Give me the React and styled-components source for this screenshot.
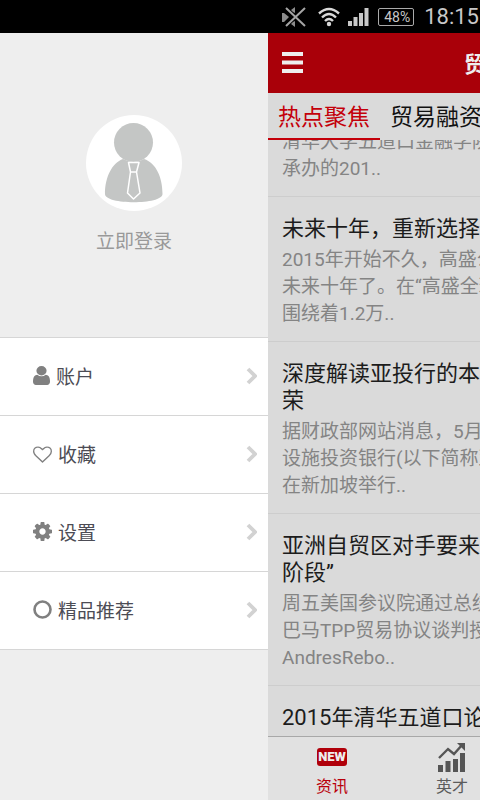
import React from "react";
import styled, { createGlobalStyle } from "styled-components";

const menu = [
  {
    label: "账户",
    width: 17,
    box: "0 128 1280 1536",
    icon: (
      <path d="M1280 1399q0 109-62.5 187t-150.5 78h-854q-88 0-150.5-78t-62.5-187q0-85 8.5-160.5t31.5-152 58.5-131 94-89 134.5-34.5q131 128 313 128t313-128q76 0 134.5 34.5t94 89 58.5 131 31.5 152 8.5 160.5zm-256-887q0 159-112.5 271.5t-271.5 112.5-271.5-112.5-112.5-271.5 112.5-271.5 271.5-112.5 271.5 112.5 112.5 271.5z" />
    ),
  },
  {
    label: "收藏",
    width: 19,
    box: "0 -100 1792 1792",
    icon: (
      <path d="M1664 596q0-81-21.5-143t-55-98.5-81.5-59.5-94-31-98-8-112 25.5-110.5 64-86.5 72-60 61.5q-18 22-49 22t-49-22q-24-28-60-61.5t-86.5-72-110.5-64-112-25.5-98 8-94 31-81.5 59.5-55 98.5-21.5 143q0 168 187 355l581 560 580-559q188-188 188-356zm128 0q0 221-229 450l-623 600q-18 18-44 18t-44-18l-624-602q-10-8-27.5-26t-55.5-65.5-68-97.5-53.5-121-23.5-138q0-220 127-344t351-124q62 0 126.5 21.5t120 58 95.5 68.5 76 68q36-36 76-68t95.5-68.5 120-58 126.5-21.5q224 0 351 124t127 344z" />
    ),
  },
  {
    label: "设置",
    width: 19,
    box: "128 128 1536 1536",
    icon: (
      <path d="M1152 896q0-106-75-181t-181-75-181 75-75 181 75 181 181 75 181-75 75-181zm512-109v222q0 12-8 23t-20 13l-185 28q-19 54-39 91 35 50 107 138 10 12 10 25t-9 23q-27 37-99 108t-94 71q-12 0-26-9l-138-108q-44 23-91 38-16 136-29 186-7 28-36 28h-222q-14 0-24.5-8.5t-11.5-21.5l-28-184q-49-16-90-37l-141 107q-10 9-25 9-14 0-25-11-126-114-165-168-7-10-7-23 0-12 8-23 15-21 51-66.5t54-70.5q-27-50-41-99l-183-27q-13-2-21-12.5t-8-23.5v-222q0-12 8-23t19-13l186-28q14-46 39-92-40-57-107-138-10-12-10-24 0-10 9-23 26-36 98.5-107.5t94.5-71.5q13 0 26 10l138 107q44-23 91-38 16-136 29-186 7-28 36-28h222q14 0 24.5 8.5t11.5 21.5l28 184q49 16 90 37l142-107q9-9 24-9 13 0 25 10 129 119 165 170 7 8 7 22 0 12-8 23-15 21-51 66.5t-54 70.5q26 50 41 98l183 28q13 2 21 12.5t8 23.5z" />
    ),
  },
  {
    label: "精品推荐",
    width: 19,
    box: "0 0 19 19",
    icon: (
      <circle cx="9.5" cy="9.5" r="8" fill="none" stroke="currentColor" strokeWidth="2.6" />
    ),
  },
];

const news = [
  { title: [], text: ["清华大学五道口金融学院", "承办的201.."] },
  {
    title: ["未来十年，重新选择支"],
    text: ["2015年开始不久，高盛公", "未来十年了。在“高盛全球", "围绕着1.2万.."],
  },
  {
    title: ["深度解读亚投行的本质", "荣"],
    text: ["据财政部网站消息，5月2", "设施投资银行(以下简称亚", "在新加坡举行.."],
  },
  {
    title: ["亚洲自贸区对手要来了", "阶段”"],
    text: ["周五美国参议院通过总统", "巴马TPP贸易协议谈判授", "AndresRebo.."],
  },
  { title: ["2015年清华五道口论坛"], text: [] },
];

const App = () => {
  return (
    <>
      <GlobalStyle />
      <Screen>
        <StatusBar>
          <svg width="24" height="24" viewBox="0 0 24 24" fill="#8c8c8c">
            <path d="M0 8h2l5 4-5 5H0zM9 5l4-3v6l-2-1zM9 19l4 3v-6l-2 1z" />
            <path d="M4 3l19 18M23 3L4 21" stroke="#a5a5a5" strokeWidth="2" />
          </svg>
          <WifiIcon width="22" height="20" viewBox="0 0 22 20" fill="none" stroke="#d8d8d8" strokeWidth="2.4">
            <path d="M1 6.500Q11-2.500 21 6.500M4 10.500Q11 3.500 18 10.500M7 14Q11 10 15 14" />
            <circle cx="11" cy="17" r="2.200" fill="#d8d8d8" stroke="none" />
          </WifiIcon>
          <svg width="21" height="20" viewBox="0 0 21 20" fill="#c8c8c8">
            <path d="M0 14h4v5H0zM5.500 10h4v9h-4zM11 6h4v13h-4zM16.500 1h4v18h-4z" />
          </svg>
          <Battery>48%</Battery>
          <Clock>18:15</Clock>
        </StatusBar>
        <Body>
          <Drawer>
            <Profile>
              <Avatar>
                <svg width="96" height="96" viewBox="0 0 96 96" fill="#c4c6c5">
                  <circle cx="47.500" cy="27.500" r="19.500" />
                  <path d="M37 44Q48 50 58 44C70 48 76.500 62 76.500 79C76.500 90 19 90 19 79C19 62 26 48 37 44Z" />
                  <path
                    d="M42.500 47.500H53L50.500 57L54 78L47.500 84L41.500 78L44.500 57ZM44.500 57h6"
                    stroke="#fff"
                    strokeWidth="1.500"
                    strokeLinejoin="round"
                  />
                </svg>
              </Avatar>
              <Login>立即登录</Login>
            </Profile>
            <Menu>
              {menu.map((item) => (
                <MenuItem key={item.label}>
                  <svg
                    width={item.width}
                    height="19"
                    viewBox={item.box}
                    preserveAspectRatio="none"
                    fill="currentColor"
                  >
                    {item.icon}
                  </svg>
                  <span>{item.label}</span>
                  <Arrow width="11" height="18" viewBox="0 0 11 18">
                    <path d="M2 2l7 7-7 7" fill="none" stroke="#d2d2d2" strokeWidth="3.800" />
                  </Arrow>
                </MenuItem>
              ))}
            </Menu>
          </Drawer>
          <Main>
            <Header>
              <MenuButton aria-label="菜单">
                <svg width="21" height="21" viewBox="0 0 21 21" fill="#eee">
                  <path d="M0 0h21v4H0zM0 8.500h21v4H0zM0 17h21v4H0z" />
                </svg>
              </MenuButton>
              <Title>贸易金融</Title>
            </Header>
            <Tabs>
              <Tab $active>热点聚焦</Tab>
              <Tab>贸易融资</Tab>
            </Tabs>
            <News>
              {news.map((item, i) => (
                <Article key={i} $cut={!item.title.length}>
                  {item.title.length > 0 && (
                    <h2>
                      {item.title.map((line) => (
                        <Line key={line}>{line}</Line>
                      ))}
                    </h2>
                  )}
                  <p>
                    {item.text.map((line) => (
                      <Line key={line}>{line}</Line>
                    ))}
                  </p>
                </Article>
              ))}
            </News>
            <BottomNav>
              <NavButton $active>
                <Badge>NEW</Badge>
                资讯
              </NavButton>
              <NavButton>
                <svg width="28" height="30" viewBox="0 0 28 30" fill="#555">
                  <path d="M0 23h5v7H0zM7.500 19h5v11h-5zM15 17h5v13h-5zM22 11h5v19h-5z" />
                  <path d="M1 16l9-9 6 5 8-9" fill="none" stroke="#555" strokeWidth="2.400" />
                  <path d="M19 1h8v8z" />
                </svg>
                英才
              </NavButton>
            </BottomNav>
          </Main>
        </Body>
      </Screen>
    </>
  );
};

export default App;

const GlobalStyle = createGlobalStyle`
  * {
    box-sizing: border-box;
    margin: 0;
    padding: 0;
  }
  body {
    font-family: Roboto, "Noto Sans CJK SC", sans-serif;
    background-color: #eee;
  }
  button {
    border: none;
    background: none;
    font-family: inherit;
    cursor: pointer;
  }
  svg {
    flex: none;
  }
`;
const Screen = styled.div`
  height: 100vh;
  display: flex;
  flex-direction: column;
  overflow: hidden;
`;
const StatusBar = styled.div`
  height: 33px;
  flex: none;
  display: flex;
  justify-content: flex-end;
  align-items: center;
  background-color: #000;
  color: #c8c8c8;
`;
const WifiIcon = styled.svg`
  margin: 0 8px 0 12px;
`;
const Battery = styled.span`
  height: 18px;
  margin: 0 10px 0 9px;
  padding: 0 3px 0 5px;
  border: 1px solid #aaa;
  border-radius: 2px;
  font-size: 14px;
  line-height: 16px;
`;
const Clock = styled.span`
  font-size: 22px;
  padding-right: 1px;
`;
const Body = styled.div`
  flex: 1;
  min-height: 0;
  display: flex;
`;
const Drawer = styled.aside`
  flex: 0 0 268px;
  background-color: #eee;
`;
const Profile = styled.div`
  height: 304px;
  padding-top: 82px;
  display: flex;
  flex-direction: column;
  align-items: center;
`;
const Avatar = styled.div`
  width: 96px;
  height: 96px;
  border-radius: 50%;
  background-color: #fff;
`;
const Login = styled.button`
  margin-top: 17px;
  font-size: 19px;
  line-height: 27px;
  color: #999;
`;
const Menu = styled.nav`
  border-top: 1px solid #d6d6d6;
`;
const MenuItem = styled.button`
  width: 100%;
  height: 78px;
  padding: 0 11px 2px 33px;
  display: flex;
  align-items: center;
  gap: 6px;
  background-color: #fff;
  border-bottom: 1px solid #d6d6d6;
  color: #808080;
  font-size: 19px;
  span {
    color: #4c4c55;
  }
`;
const Arrow = styled.svg`
  margin-left: auto;
`;
/* the page keeps its full width and slides out under the right edge */
const Main = styled.main`
  flex: 0 0 100vw;
  display: flex;
  flex-direction: column;
  background-color: #dadada;
`;
const Header = styled.header`
  height: 60px;
  flex: none;
  padding: 0 14px 2px;
  display: grid;
  grid-template-columns: 21px 1fr 21px;
  align-items: center;
  background-color: #a90009;
`;
const MenuButton = styled.button`
  height: 21px;
`;
const Title = styled.h1`
  text-align: center;
  font-size: 22px;
  color: #eee;
`;
const Tabs = styled.div`
  height: 47px;
  flex: none;
  display: flex;
`;
const Tab = styled.button`
  padding: 0 10px 2px;
  font-size: 23px;
  color: ${(props) => (props.$active ? "#c4000a" : "#111")};
  border-bottom: 2px solid ${(props) => (props.$active ? "#c4000a" : "transparent")};
`;
const News = styled.div`
  flex: 1;
  min-height: 0;
  overflow: hidden;
`;
const Article = styled.article`
  margin-top: ${(props) => (props.$cut ? "-12px" : "0")};
  padding: ${(props) => (props.$cut ? "0" : "18px")} 14px 14px;
  border-bottom: 1px solid #cdcdcd;
  line-height: 27px;
  h2 {
    margin-bottom: 4px;
    font-size: 22px;
    font-weight: 400;
    color: #1c1c1c;
  }
  p {
    font-size: 19px;
    color: #848484;
  }
`;
const Line = styled.span`
  display: block;
  white-space: nowrap;
`;
const BottomNav = styled.nav`
  height: 64px;
  flex: none;
  padding-left: 4px;
  display: flex;
  background-color: #e1e1e1;
  border-top: 1px solid #a8a8a8;
`;
const NavButton = styled.button`
  flex: 0 0 25vw;
  padding-top: 5px;
  display: flex;
  flex-direction: column;
  align-items: center;
  gap: 3px;
  font-size: 16px;
  line-height: 24px;
  color: ${(props) => (props.$active ? "#b9000c" : "#5c5c5c")};
`;
const Badge = styled.span`
  height: 18px;
  margin: 6px 0;
  padding: 0 1px;
  border-radius: 3px;
  background-color: #b0000a;
  color: #eee;
  font-size: 13px;
  line-height: 18px;
  font-weight: 900;
`;
